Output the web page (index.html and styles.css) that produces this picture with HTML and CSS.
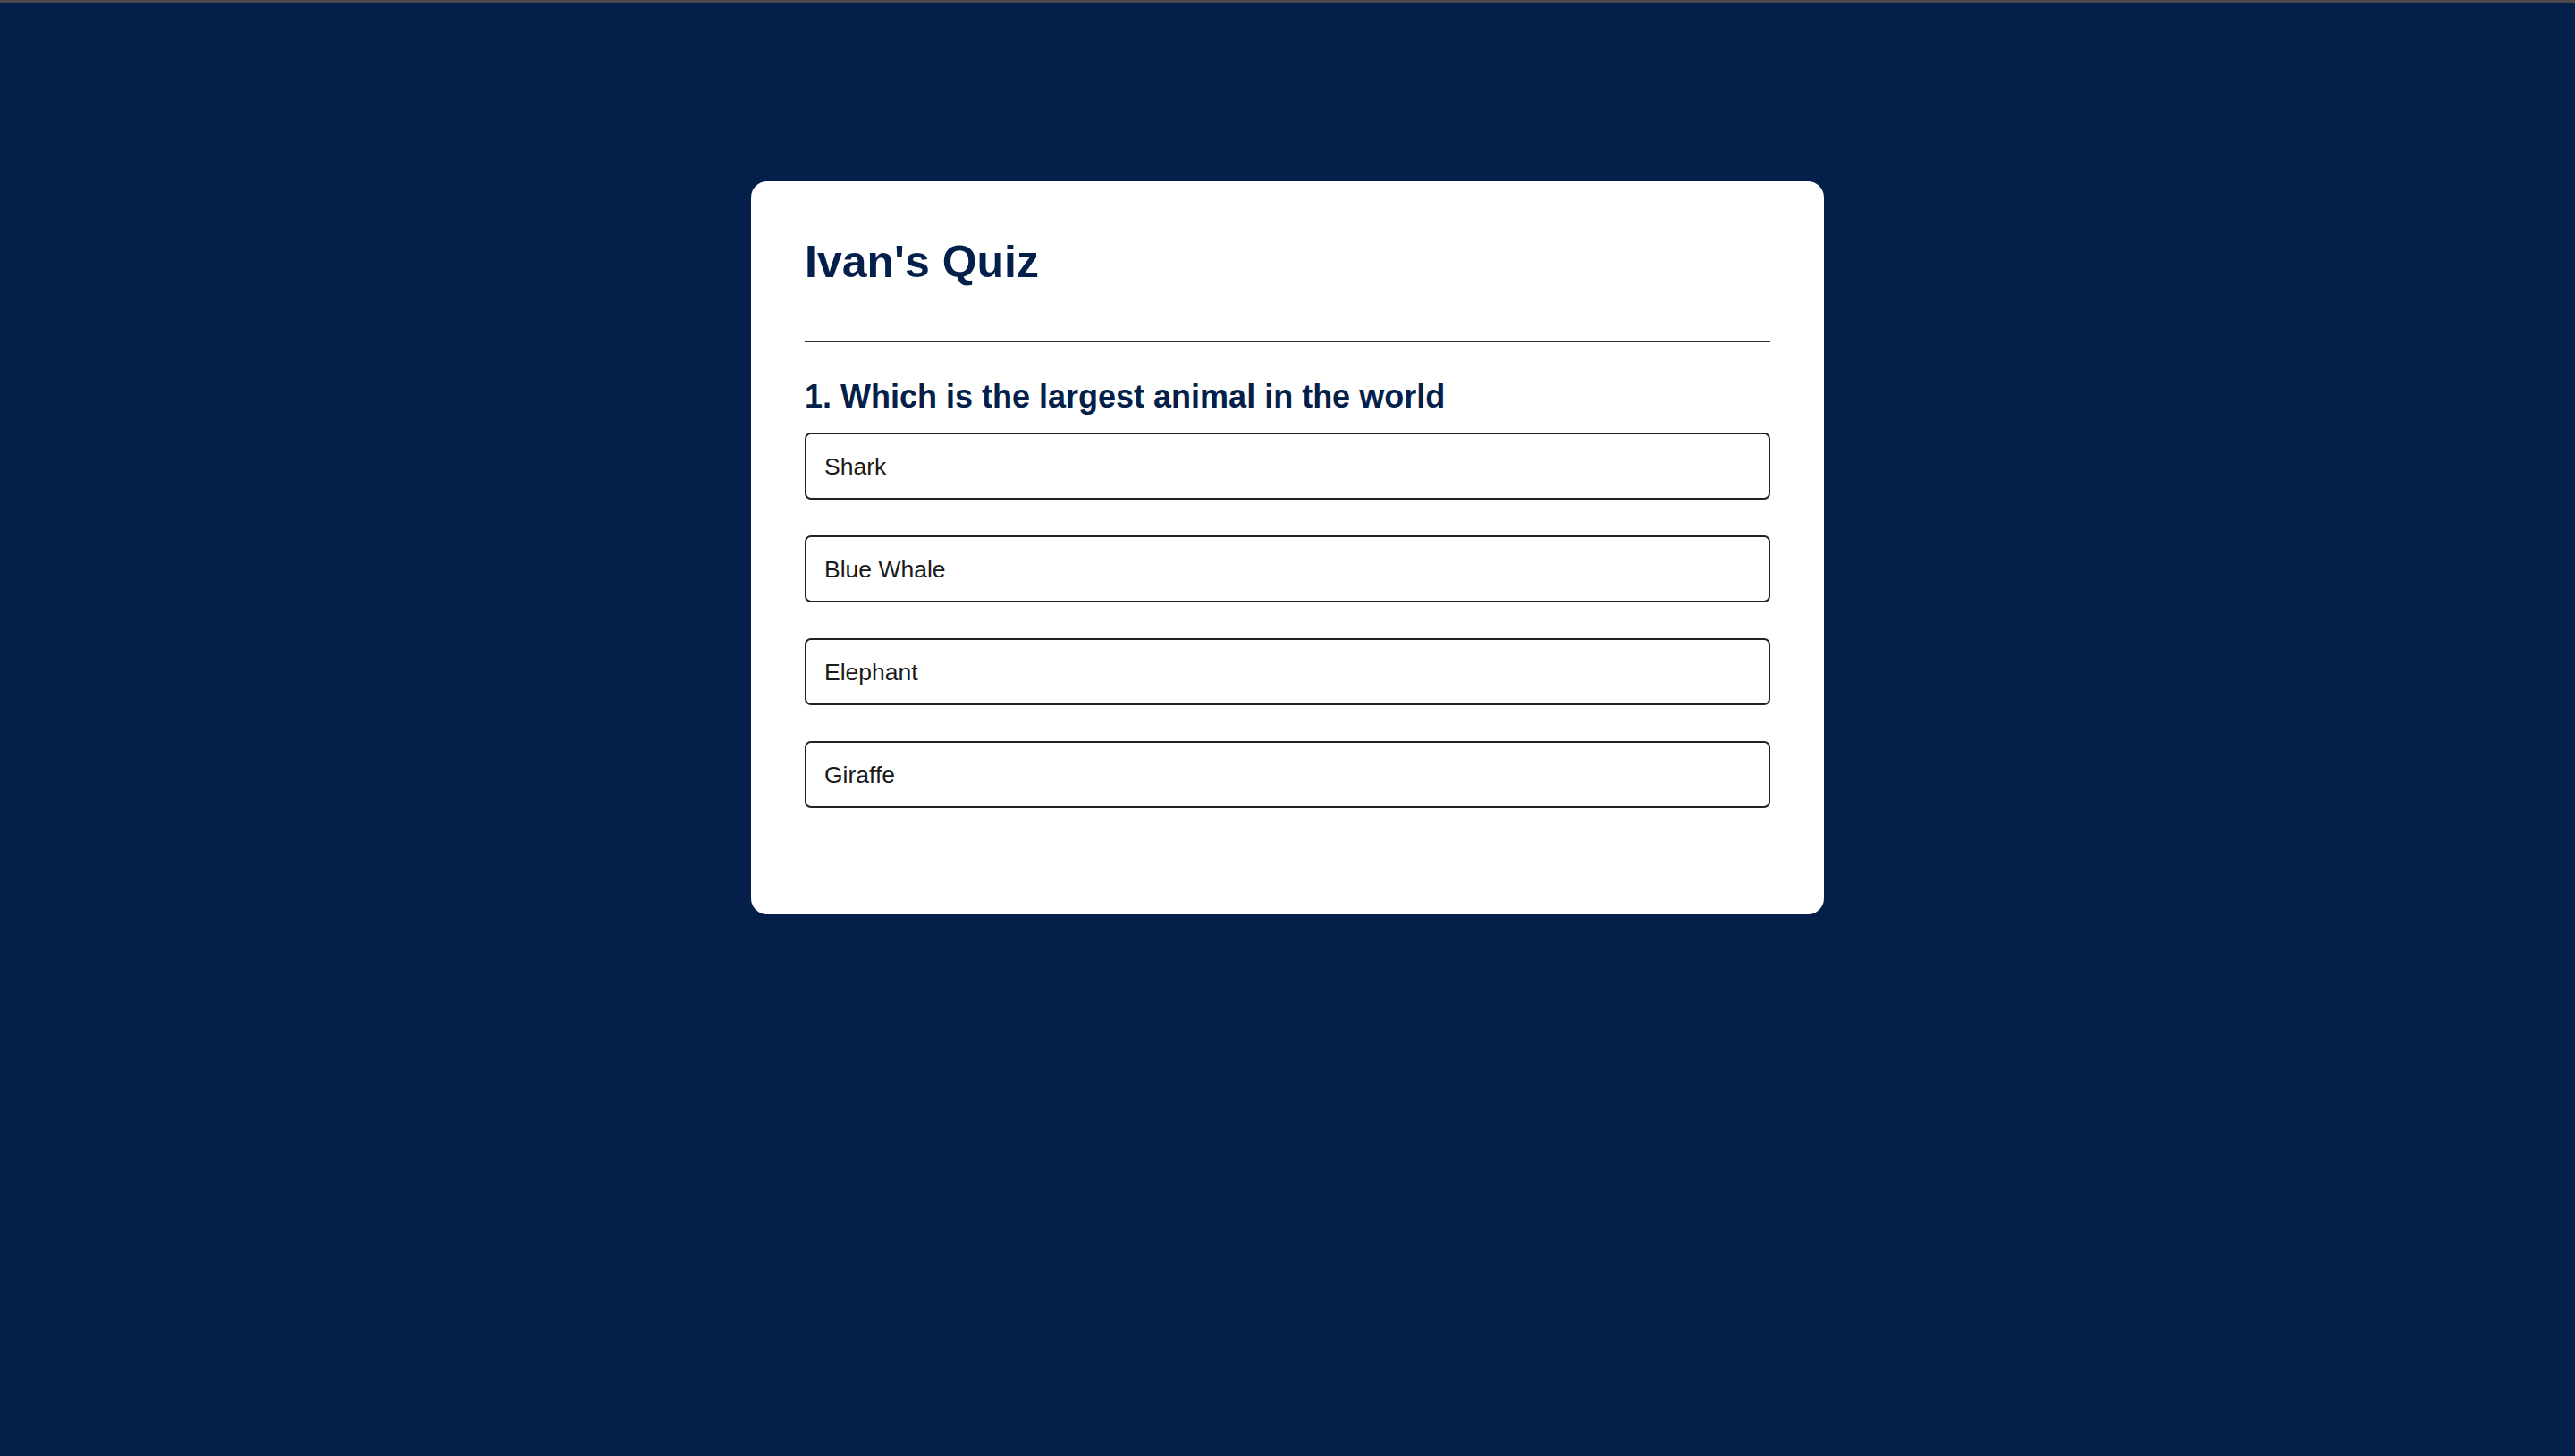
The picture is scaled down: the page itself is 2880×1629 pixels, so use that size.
FILE: index.html
```html
<!DOCTYPE html>
<html lang="en">
<head>
<meta charset="utf-8">
<title>Ivan's Quiz</title>
<link rel="stylesheet" href="styles.css">
</head>
<body>
  <main class="quiz">
    <h1 class="quiz-title">Ivan's Quiz</h1>
    <hr class="quiz-divider">
    <section class="question">
      <h2 class="question-text">1. Which is the largest animal in the world</h2>
      <div class="answers">
        <button class="answer">Shark</button>
        <button class="answer">Blue Whale</button>
        <button class="answer">Elephant</button>
        <button class="answer">Giraffe</button>
      </div>
    </section>
  </main>
</body>
</html>
```

FILE: styles.css
```css
* {
  box-sizing: border-box;
}

html, body {
  height: 100%;
}

body {
  margin: 0;
  background: #031f4a;
  border-top: 3px solid #4a4a4a;
  font-family: "Liberation Sans", Arial, Helvetica, sans-serif;
}

.quiz {
  width: 1200px;
  margin: 200px auto 0;
  padding: 60px;
  background: #ffffff;
  border-radius: 18px;
}

.quiz-title {
  margin: 0;
  font-size: 50px;
  line-height: 60px;
  font-weight: 700;
  color: #031f4a;
}

.quiz-divider {
  margin: 58px 0 0;
  border: 0;
  height: 2px;
  background: #333333;
}

.question-text {
  margin: 40px 0 0;
  font-size: 36px;
  line-height: 42px;
  font-weight: 700;
  color: #031f4a;
}

.answers {
  display: flex;
  flex-direction: column;
  gap: 40px;
  margin: 19px 0 59px;
}

.answer {
  display: block;
  width: 100%;
  height: 75px;
  padding: 2px 20px 0;
  border: 2px solid #222222;
  border-radius: 7px;
  background: #ffffff;
  font-family: "Liberation Sans", Arial, Helvetica, sans-serif;
  font-size: 26.5px;
  color: #1a1a1a;
  text-align: left;
  cursor: pointer;
}
```
